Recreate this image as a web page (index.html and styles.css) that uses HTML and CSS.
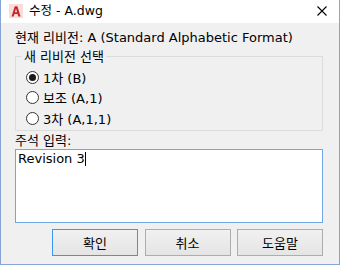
FILE: index.html
```html
<!DOCTYPE html>
<html lang="ko">
<head>
<meta charset="utf-8">
<link rel="stylesheet" href="styles.css">
</head>
<body>
<div class="window">
  <div class="titlebar">
    <span class="app-icon">
      <svg width="14" height="14" viewBox="0 0 14 14">
        <rect width="14" height="14" fill="#f6dedb"/>
        <path d="M2.5 12.5 L5.8 2.2 L8.4 2.2 L11.6 12.5 L9.3 12.5 L8.6 10.1 L5.4 10.1 L4.7 12.5 Z M5.9 8.3 L8.1 8.3 L7 4.6 Z" fill="#c9252f" fill-rule="evenodd"/>
      </svg>
    </span>
    <span class="title">수정 - A.dwg</span>
    <span class="close">
      <svg width="10" height="10" viewBox="0 0 10 10">
        <path d="M0.5 0.5 L9.5 9.5 M9.5 0.5 L0.5 9.5" stroke="#000" stroke-width="1.1"/>
      </svg>
    </span>
  </div>
  <div class="content">
    <div class="current">현재 리비전: A (Standard Alphabetic Format)</div>
    <fieldset class="group">
      <legend>새 리비전 선택</legend>
      <div class="radios">
        <label class="radio"><span class="dot checked"></span>1차 (B)</label>
        <label class="radio"><span class="dot"></span>보조 (A,1)</label>
        <label class="radio"><span class="dot"></span>3차 (A,1,1)</label>
      </div>
    </fieldset>
    <div class="note-label">주석 입력:</div>
    <div class="textarea">Revision 3<span class="caret"></span></div>
    <div class="buttons">
      <button class="btn default">확인</button>
      <button class="btn">취소</button>
      <button class="btn">도움말</button>
    </div>
  </div>
</div>
</body>
</html>
```
FILE: styles.css
```css
* { box-sizing: border-box; }
html, body { margin: 0; padding: 0; background: #fff; }
body {
  font-family: "DejaVu Sans", "Noto Sans CJK KR", sans-serif;
  font-size: 13px;
  color: #000;
}
.window {
  width: 340px;
  height: 265px;
  border: 1px solid #86a4d6;
  border-top: none;
  background: #f0f0f0;
  display: flex;
  flex-direction: column;
}
.titlebar {
  height: 23px;
  background: #fff;
  display: flex;
  align-items: center;
  padding-left: 8px;
  padding-right: 12px;
}
.app-icon { width: 14px; height: 14px; display: flex; margin-top: -1px; }
.title { margin-left: 6px; font-size: 12.5px; line-height: 14px; margin-top: -2px; }
.close { margin-left: auto; display: flex; margin-top: -1px; }
.content {
  padding: 7px 16px 0 14px;
  display: flex;
  flex-direction: column;
}
.current { line-height: 15px; height: 15px; white-space: nowrap; }
.group {
  margin: 4px 0 0 0;
  padding: 0 0 3px 6px;
  border: 1px solid #dcdcdc;
  height: 82px;
  min-width: 0;
}
.group legend {
  padding: 0 2px;
  line-height: 15px;
}
.radios {
  display: flex;
  flex-direction: column;
  padding-left: 4px;
  margin-top: 3px;
}
.radio {
  display: flex;
  align-items: center;
  height: 20.5px;
  gap: 4px;
}
.dot {
  width: 13px;
  height: 13px;
  border: 1px solid #333;
  border-radius: 50%;
  background: #fff;
  display: flex;
  align-items: center;
  justify-content: center;
}
.dot.checked::after {
  content: "";
  width: 7px;
  height: 7px;
  border-radius: 50%;
  background: #1a1a1a;
}
.note-label { margin-top: 2px; line-height: 15px; height: 16px; }
.textarea {
  height: 74px;
  border: 1px solid #6ea6e6;
  background: #fff;
  padding: 1px 2px;
  line-height: 16px;
  display: flex;
  align-items: flex-start;
}
.caret {
  display: inline-block;
  width: 1px;
  height: 14px;
  background: #000;
  margin-top: 1px;
}
.buttons {
  display: flex;
  justify-content: flex-end;
  gap: 6.5px;
  margin-top: 6px;
}
.btn {
  width: 86px;
  height: 27px;
  border: 1px solid #adadad;
  background: linear-gradient(#f1f1f1, #e4e4e4);
  font-family: inherit;
  font-size: 13px;
  color: #000;
  padding: 0;
}
.btn.default { border-color: #3a96f0; }
```
